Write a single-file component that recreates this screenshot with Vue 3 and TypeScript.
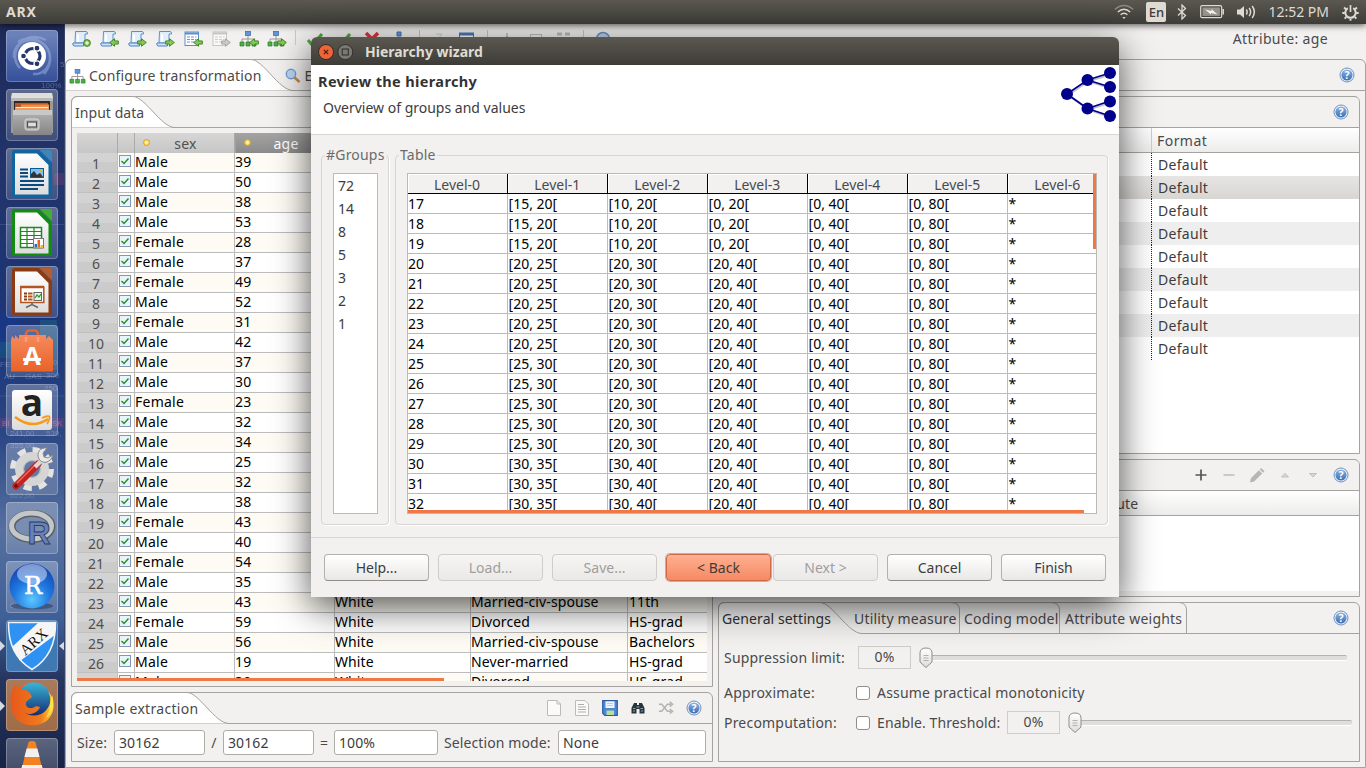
<script setup lang="ts">
interface Person { sex: string; age: number; race?: string; status?: string; edu?: string }

const people: Person[] = [
  { sex: 'Male', age: 39 }, { sex: 'Male', age: 50 }, { sex: 'Male', age: 38 }, { sex: 'Male', age: 53 },
  { sex: 'Female', age: 28 }, { sex: 'Female', age: 37 }, { sex: 'Female', age: 49 }, { sex: 'Male', age: 52 },
  { sex: 'Female', age: 31 }, { sex: 'Male', age: 42 }, { sex: 'Male', age: 37 }, { sex: 'Male', age: 30 },
  { sex: 'Female', age: 23 }, { sex: 'Male', age: 32 }, { sex: 'Male', age: 34 }, { sex: 'Male', age: 25 },
  { sex: 'Male', age: 32 }, { sex: 'Male', age: 38 }, { sex: 'Female', age: 43 }, { sex: 'Male', age: 40 },
  { sex: 'Female', age: 54 }, { sex: 'Male', age: 35 },
  { sex: 'Male', age: 43, race: 'White', status: 'Married-civ-spouse', edu: '11th' },
  { sex: 'Female', age: 59, race: 'White', status: 'Divorced', edu: 'HS-grad' },
  { sex: 'Male', age: 56, race: 'White', status: 'Married-civ-spouse', edu: 'Bachelors' },
  { sex: 'Male', age: 19, race: 'White', status: 'Never-married', edu: 'HS-grad' },
  { sex: 'Male', age: 39, race: 'White', status: 'Divorced', edu: 'HS-grad' },
]

const range = (v: number, step: number): string => {
  const low = Math.floor(v / step) * step
  return `[${low}, ${low + step}[`
}
const levels: string[] = [0, 1, 2, 3, 4, 5, 6].map((n) => `Level-${n}`)
const hierarchy: string[][] = Array.from({ length: 16 }, (_, i) => {
  const v = 17 + i
  return [String(v), range(v, 5), range(v, 10), range(v, 20), range(v, 40), range(v, 80), '*']
})
const groups: number[] = [72, 14, 8, 5, 3, 2, 1]
const formats: string[] = Array(9).fill('Default')
const launchers: string[] = ['dash', 'files', 'writer', 'calc', 'impress', 'store', 'amazon', 'settings', 'r', 'rstudio', 'arx', 'firefox', 'vlc']
</script>

<template>
  <div class="screen">
    <svg class="defs" width="0" height="0">
      <defs>
        <linearGradient id="gTile" x1="0" y1="0" x2="0" y2="1"><stop offset="0" stop-color="#fff" /><stop offset="1" stop-color="#dcdcdc" /></linearGradient>
        <linearGradient id="gBlue" x1="0" y1="0" x2="0" y2="1"><stop offset="0" stop-color="#8db4e3" /><stop offset="1" stop-color="#3a6db4" /></linearGradient>
        <linearGradient id="gMetal" x1="0" y1="0" x2="0" y2="1"><stop offset="0" stop-color="#b4b4b4" /><stop offset="1" stop-color="#858585" /></linearGradient>
        <linearGradient id="gBag" x1="0" y1="0" x2="0" y2="1"><stop offset="0" stop-color="#f58a5c" /><stop offset="1" stop-color="#ea6226" /></linearGradient>
        <radialGradient id="gBall" cx=".5" cy=".8" r=".8"><stop offset="0" stop-color="#5cc8ff" /><stop offset=".5" stop-color="#1f78e0" /><stop offset="1" stop-color="#1242b0" /></radialGradient>
        <linearGradient id="gFox" x1="0" y1="0" x2="1" y2="0"><stop offset="0" stop-color="#e8581a" /><stop offset=".7" stop-color="#f07a1c" /><stop offset="1" stop-color="#ffd640" /></linearGradient>
        <linearGradient id="gGlobe" x1="0" y1="0" x2="0" y2="1"><stop offset="0" stop-color="#39b5d8" /><stop offset="1" stop-color="#142c72" /></linearGradient>
        <linearGradient id="gTab" x1="0" y1="0" x2="0" y2="1"><stop offset="0" stop-color="#fff" /><stop offset="1" stop-color="#f2f1f0" /></linearGradient>
        <linearGradient id="gKnob" x1="0" y1="0" x2="0" y2="1"><stop offset="0" stop-color="#fff" /><stop offset="1" stop-color="#dedcda" /></linearGradient>
      </defs>
      <symbol id="help" viewBox="0 0 16 16">
        <circle cx="8" cy="8" r="7" fill="#f4f7fb" stroke="#6d90be" />
        <circle cx="8" cy="8" r="5.600" fill="url(#gBlue)" />
        <text x="8" y="12" text-anchor="middle" font-size="10.500" font-weight="700" fill="#fff" font-family="Noto Sans, sans-serif">?</text>
      </symbol>
      <symbol id="arrow" viewBox="0 0 9 8"><path d="M.6 2.600H4V.6L8.400 4 4 7.400V5.400H.6z" fill="#8fc455" stroke="#3c8a2a" stroke-width=".9" /></symbol>
      <symbol id="scroll" viewBox="0 0 18 18">
        <path d="M4.500 1.500H15q1.800.2 1.500 2.500H14V13H4z" fill="#e2eefa" stroke="#5f93cc" />
        <path d="M2 13H12.500V16H3Q1.200 15.500 2 13z" fill="#cfe2f6" stroke="#4c83c2" />
        <path d="M7 4.500V12" stroke="#fff" stroke-width="2" />
      </symbol>
      <symbol id="tree" viewBox="0 0 18 18">
        <path d="M9 4V9M3 13V9H15V13M9 9V13" fill="none" stroke="#9a9a9a" />
        <rect x="6.500" y="1.500" width="5" height="4" fill="#6397d8" stroke="#3f72b4" stroke-width=".8" />
        <path d="M1 12h4v4H1zM7 12h4v4H7zM13 12h4v4h-4z" fill="#4fae45" stroke="#2c7b28" stroke-width=".7" />
      </symbol>
      <symbol id="sheet" viewBox="0 0 18 18">
        <rect x="2" y="2" width="13.500" height="13.500" fill="#fff" stroke="currentColor" />
        <path d="M2 3.500H15.500" stroke="currentColor" stroke-width="2" />
        <path d="M4 7H13.500M4 9.500H13.500M4 12H13.500" stroke="currentColor" stroke-dasharray="3 1" stroke-width=".9" />
      </symbol>
    </svg>

    <header class="topbar">
      <b class="appname">ARX</b>
      <div class="tray">
        <svg width="20" height="16" viewBox="0 0 20 16" fill="none" stroke="#dfdbd2" stroke-width="1.500"><path d="M.8 5.500Q10-2.500 19.200 5.500" opacity=".4" /><path d="M3.800 8Q10 2.500 16.200 8M6.600 10.800Q10 7.800 13.400 10.800" /><path d="M8.300 13H11.700L10 15z" fill="#dfdbd2" stroke="none" /></svg>
        <span class="lang">En</span>
        <svg class="bt" width="10" height="16" viewBox="0 0 10 16" fill="none" stroke="#dfdbd2" stroke-width="1.300"><path d="M1 4.500 8.500 11.500 5 15V1L8.500 4.500 1 11.500" /></svg>
        <svg class="bat" width="25" height="14" viewBox="0 0 25 14"><rect x=".7" y=".7" width="21" height="12" rx="1.500" fill="none" stroke="#dfdbd2" stroke-width="1.200" /><rect x="2.500" y="2.500" width="17.400" height="8.400" fill="#96938b" /><path d="M23.200 4v5.500" stroke="#dfdbd2" stroke-width="1.500" /><path d="M5 4.500 11.500 6V4L17.500 9.500 11 8V9.500z" fill="#f4f2ee" /></svg>
        <svg class="vol" width="21" height="16" viewBox="0 0 21 16"><path d="M1 5.500H4L8 2V14L4 10.500H1z" fill="#dfdbd2" /><path d="M10.300 5.500Q12 8 10.300 10.500M13.200 3.800Q16 8 13.200 12.200M16.200 2Q20.500 8 16.200 14" fill="none" stroke="#dfdbd2" stroke-width="1.500" /></svg>
        <span class="clock">12:52 PM</span>
        <svg width="17" height="17" viewBox="0 0 17 17" fill="none" stroke="#dfdbd2"><path d="M5.800 4.200A5.200 5.200 0 1 0 11.200 4.200" stroke-width="2" /><path d="M8.500 1V8" stroke-width="1.700" /><path d="M2 3.500 4 5.200M15 3.500 13 5.200M.3 9H2.800M14.200 9H16.700M2.700 14.600 4.200 13M14.300 14.600 12.800 13M8.500 14.500V16.800" stroke-width="1.900" /></svg>
      </div>
    </header>

    <div class="below">
      <nav class="launcher">
        <svg class="wall" width="65" height="744" viewBox="0 0 65 744" font-family="Liberation Sans" font-size="8" fill="#7d97c8">
          <path d="M0 200.500H65M0 372H65" stroke="#6b87ba" opacity=".5" />
          <rect y="290" width="20" height="38" fill="#163aa0" opacity=".6" /><rect x="40" y="296" width="17" height="50" fill="#1f8d93" opacity=".5" /><rect y="318" width="26" height="16" fill="#127b88" opacity=".5" />
          <rect y="394" width="65" height="10" fill="#7b3f7c" opacity=".75" /><rect x="54" y="149" width="11" height="12" fill="#8a3f6e" opacity=".6" />
          <text x="2" y="402" fill="#d08bb0">BI</text><text x="52" y="402" fill="#d08bb0">SK</text>
          <text x="0" y="343">FEB</text><text x="44" y="341">350</text><text x="4" y="355">AU</text><text x="25" y="355">GAS</text><text x="44" y="367">250</text><text x="46" y="354">300</text><text x="10" y="412">241,00</text><text x="46" y="412">539,</text><text x="10" y="424">355,00</text><text x="10" y="474">622,00</text><text x="10" y="584">608,00</text><text x="41" y="64">100%</text><text x="60" y="43">5</text>
        </svg>
        <div v-for="k in launchers" :key="k" class="tile" :class="k">
          <svg v-if="k === 'dash'" width="52" height="52" viewBox="0 0 52 52">
            <path d="M8 28C6 4 44 4 44 28 44 38 36 45 27 44M12 12C30 0 56 22 38 44M14 38C0 24 18-2 40 10" fill="none" stroke="#a9bce8" stroke-opacity=".45" stroke-width="2.500" />
            <circle cx="26" cy="26" r="14" fill="#fff" /><circle cx="26.500" cy="26" r="7.500" fill="none" stroke="#26386b" stroke-width="3.200" />
            <g fill="#26386b" stroke="#fff" stroke-width="1.300"><circle cx="17.500" cy="26" r="3" /><circle cx="31" cy="18.200" r="3" /><circle cx="31" cy="33.800" r="3" /></g>
          </svg>
          <svg v-else-if="k === 'files'" width="52" height="52" viewBox="0 0 52 52">
            <path d="M6 4H46L47 10V44H5V10z" fill="#9a9a99" /><path d="M6 4H46L47 9H5z" fill="#dededc" /><path d="M5 9H47V12H5z" fill="#b9b9b7" /><rect x="8" y="12" width="36" height="10" fill="#2e2a28" />
            <path d="M9 14H42V17H9z" fill="#c9531f" /><path d="M15 15.500H43V21H15z" fill="#f08a44" /><path d="M9 17.500H43V21H9z" fill="#f29a58" /><path d="M10 18.500H42" stroke="#fff" opacity=".8" />
            <path d="M7 21H46V46H7z" fill="url(#gMetal)" /><path d="M7 21H46V26H7z" fill="#c8c8c8" /><rect x="19" y="30" width="14" height="11" rx="2" fill="#b0b0b0" stroke="#dadada" /><rect x="21.500" y="33" width="9" height="5" fill="#ddd" stroke="#4f4f4f" stroke-width="1.200" />
          </svg>
          <svg v-else-if="['writer', 'calc', 'impress'].includes(k)" width="52" height="52" viewBox="0 0 52 52">
            <path d="M8.500 2H33L46 15V49H6V4.500Q6 2 8.500 2z" :fill="k === 'writer' ? '#11659e' : k === 'calc' ? '#138a12' : '#8c3a12'" />
            <path d="M34 2H44Q46 2 46 4V14z" :fill="k === 'writer' ? '#3a86bd' : k === 'calc' ? '#3faf35' : '#b85c2a'" />
            <path d="M9 5.500H31L42.500 17V46.500H9z" fill="url(#gTile)" />
            <g v-if="k === 'writer'"><path d="M14 21.500H22M14 25H22M14 28.500H22M14 33H38M14 37H38M14 41H32" stroke="#0b4a7c" stroke-width="1.900" /><rect x="24.500" y="20.500" width="13" height="9" fill="#7fc0ee" stroke="#0b5c96" /><path d="M25 29V26L28 23 31 27 34 25 37 29z" fill="#333" /><circle cx="35" cy="23" r="1.300" fill="#f6b21c" /></g>
            <g v-else-if="k === 'calc'"><rect x="14.500" y="20.500" width="21" height="20" fill="#fff" stroke="#1b8a18" stroke-width="1.500" /><path d="M14 24.500H36M14 28.500H36M14 32.500H36M14 36.500H36M21 20V41M28 20V41" stroke="#1b8a18" stroke-width="1.200" /><rect x="27.500" y="31.500" width="10" height="9.500" fill="#fff" stroke="#777" /><path d="M28.500 37H31V40.500H28.500z" fill="#2c6fb2" /><path d="M31.500 33H34V40.500H31.500z" fill="#e5661c" /><path d="M34.500 38H37V40.500H34.500z" fill="#f2b81c" /></g>
            <g v-else><rect x="14.800" y="21" width="23" height="15.500" fill="#fff" stroke="#b3551f" stroke-width="1.500" /><path d="M14 21H38" stroke="#b3551f" stroke-width="2.500" /><path d="M18 27.500H21M18 30.500H21M18 33.500H21" stroke="#8c3a12" stroke-width="1.800" /><path d="M22 27.500H26.500M22 30.500H26.500M22 33.500H26.500" stroke="#b3551f" stroke-width="1.800" /><rect x="28" y="26.500" width="7.500" height="8" fill="#e9f4e7" stroke="#666" /><path d="M29 32 31 29 33 31 35 28" fill="none" stroke="#2b9a28" stroke-width="1.300" /><path d="M26 36.500V39M20 41.500 26 38.500 32 41.500" fill="none" stroke="#666" stroke-width="1.500" /></g>
          </svg>
          <svg v-else-if="k === 'store'" width="52" height="52" viewBox="0 0 52 52">
            <path d="M20 17V9Q20 5.500 24 5.500H28Q32 5.500 32 9V17" fill="none" stroke="#d9673a" stroke-width="2.600" /><path d="M6 11 9 14V10L13 14V10H40V14L43 11 47 15V46.500H5V15z" fill="url(#gBag)" />
            <path d="M20 17V12M32 17V12" stroke="#f3a17c" stroke-width="2.400" /><text x="26" y="40" text-anchor="middle" font-family="Open Sans, sans-serif" font-size="25" font-weight="700" fill="#fff">A</text><path d="M17 34.500H35" stroke="#fff" stroke-width="3" />
          </svg>
          <svg v-else-if="k === 'amazon'" width="52" height="52" viewBox="0 0 52 52">
            <rect x="6" y="6" width="40" height="40" rx="3" fill="url(#gTile)" /><text x="26" y="32" text-anchor="middle" font-family="Open Sans, sans-serif" font-size="37" font-weight="700" fill="#222">a</text>
            <path d="M9 33Q26 46 42 35" fill="none" stroke="#f79a1c" stroke-width="2.600" /><path d="M36 34Q43 31 43.500 33T41 40" fill="none" stroke="#f79a1c" stroke-width="1.800" />
          </svg>
          <svg v-else-if="k === 'settings'" width="52" height="52" viewBox="0 0 52 52">
            <circle cx="26" cy="26" r="18" fill="none" stroke="#e3e3e1" stroke-width="8" stroke-dasharray="7.600 6.537" /><circle cx="26" cy="26" r="12.500" fill="none" stroke="#d5d5d3" stroke-width="9" /><circle cx="26" cy="26" r="8.500" fill="none" stroke="#b5b5b3" />
            <path d="M10 43 32 21" stroke="#c4241f" stroke-width="7" stroke-linecap="round" /><path d="M11 40 30 21" stroke="#ef6a60" stroke-width="1.500" /><path d="M29 24 36 17" stroke="#d8d8d8" stroke-width="4.500" /><path d="M41 5C34 4 30 10 33 16 36 21 44 21 47 12L42 15 38 14 37 10z" fill="#e8e8e8" stroke="#8a8a8a" /><circle cx="10" cy="43" r="1.800" fill="#601310" />
          </svg>
          <svg v-else-if="k === 'r'" width="52" height="52" viewBox="0 0 52 52">
            <ellipse cx="26" cy="24.500" rx="20" ry="13" fill="none" stroke="#5e6164" stroke-width="7" /><ellipse cx="25.500" cy="24" rx="20" ry="13" fill="none" stroke="#c3c7ca" stroke-width="5" />
            <text x="33" y="42" text-anchor="middle" font-family="Liberation Sans" font-size="32" font-weight="700" fill="#6a80b3" stroke="#2a3c6c" stroke-width=".9">R</text>
          </svg>
          <svg v-else-if="k === 'rstudio'" width="52" height="52" viewBox="0 0 52 52">
            <ellipse cx="26" cy="45" rx="21" ry="3.500" fill="#2b3f64" opacity=".6" /><circle cx="26" cy="25" r="22.500" fill="url(#gBall)" /><ellipse cx="26" cy="13" rx="15" ry="10" fill="#fff" opacity=".45" />
            <text x="27" y="33" text-anchor="middle" font-family="DejaVu Serif" font-size="24" fill="#fff" stroke="#fff" stroke-width=".5">R</text>
          </svg>
          <svg v-else-if="k === 'arx'" width="52" height="52" viewBox="0 0 52 52">
            <path d="M2.500 2.500H49.500C50 26 40 41 26 49.500 12 41 2 26 2.500 2.500z" fill="#2f92f2" stroke="#eef4fa" stroke-width="1.500" />
            <path d="M32 3H49L49 15 14 41 6 27z" fill="#f6f6f6" />
            <text x="28" y="26.500" text-anchor="middle" font-family="Liberation Serif" font-size="15" fill="#111" transform="rotate(-42 28 22)">ARX</text>
          </svg>
          <svg v-else-if="k === 'firefox'" width="52" height="52" viewBox="0 0 52 52">
            <circle cx="26" cy="25" r="21" fill="url(#gFox)" /><circle cx="28" cy="20" r="16.500" fill="url(#gGlobe)" />
            <path d="M5 27C3 16 7 9 9 5L14 11C19 9 24 13 26 18L21 22C17 27 24 32 30 27L34 28C31 36 20 37 16 32 20 41 34 41 41 32 46 26 45 17 42 13 52 24 48 40 35 45 18 50 6 40 5 27z" fill="url(#gFox)" />
            <path d="M46 16C49 24 47 34 40 39 45 32 43 25 46 16z" fill="#ffe24a" />
          </svg>
          <svg v-else width="52" height="52" viewBox="0 0 52 52">
            <path d="M22.500 4Q26 2 29.500 4L40 45H12z" fill="#f58220" /><path d="M20.700 10.500H31.300L33.600 19H18.400zM16.300 27H35.700L38 35H14z" fill="#f1f1f1" /><rect x="7" y="42" width="38" height="7" rx="2" fill="#f58220" />
          </svg>
        </div>
        <svg class="pips" width="65" height="120" viewBox="0 0 65 120" fill="#d5d9e2"><path d="M0 20 5 25 0 30zM65 20 59 25 65 30zM0 80 5 85 0 90z" /></svg>
      </nav>

      <main class="app">
        <div class="toolbar">
          <div class="tools">
            <div v-for="n in 4" :key="'s' + n" class="tool"><svg width="18" height="18"><use href="#scroll" /></svg>
              <svg v-if="n === 1" class="badge" width="8" height="8" viewBox="0 0 8 8"><circle cx="4" cy="4" r="3.400" fill="#85bd50" stroke="#3c8a2a" /><path d="M2 4H6M4 2V6" stroke="#fff" /></svg>
              <svg v-else class="badge" :class="{ flip: n === 2 }" width="10" height="9"><use href="#arrow" /></svg>
            </div>
            <div class="tool blue"><svg width="18" height="18"><use href="#sheet" /></svg><svg class="badge flip" width="10" height="9"><use href="#arrow" /></svg></div>
            <div class="tool dim"><svg width="18" height="18"><use href="#sheet" /></svg><svg class="badge" width="10" height="9"><use href="#arrow" /></svg></div>
            <div class="tool"><svg width="18" height="18"><use href="#tree" /></svg><svg class="badge flip" width="10" height="9"><use href="#arrow" /></svg></div>
            <div class="tool"><svg width="18" height="18"><use href="#tree" /></svg><svg class="badge" width="10" height="9"><use href="#arrow" /></svg></div>
            <i class="sep"></i>
            <svg class="more" width="320" height="18" viewBox="0 0 320 18" fill="none">
              <path d="M10 10 14 15 24 4M38 10 42 15 52 4" stroke="#4fa543" stroke-width="3" /><path d="M68 3 80 15M80 3 68 15" stroke="#d8383c" stroke-width="3.500" />
              <path d="M99 2H103V6H99z" fill="#6397d8" stroke="#3f72b4" /><path d="M138 4H144L140 9" stroke="#ccc" /><path d="M121.500 0V15M189.500 0V15M285.500 0V15" stroke="#c8c6c3" />
              <rect x="161.500" y="3.500" width="14" height="12" fill="#fff" stroke="#4a76b8" /><path d="M161 4H176" stroke="#4a76b8" stroke-width="3" /><path d="M209 8V3M204 13 209 6 214 13" stroke="#bbb" stroke-width="1.500" /><rect x="232.500" y="4.500" width="11" height="9" stroke="#bbb" /><path d="M259 4H264M267 4H272" stroke="#bbb" stroke-width="3" />
              <circle cx="305" cy="9" r="6.500" fill="#b9d0ec" stroke="#6d90be" stroke-width="1.500" />
            </svg>
          </div>
          <span class="attr">Attribute: age</span>
        </div>

        <section class="folder outer">
          <div class="head">
            <svg class="shape" width="240" height="32" viewBox="0 0 240 32"><path d="M.5 31.500V7Q.5.500 7 .5H186C198 .5 214 31.500 228 31.500H0" fill="#fff" /><path d="M.5 32V7Q.5.500 7 .5H186C198 .5 214 31.500 228 31.500" fill="none" stroke="#a5a39f" /></svg>
            <div class="tab conf"><svg width="17" height="17"><use href="#tree" /></svg><span>Configure transformation</span></div>
            <div class="tab explore"><svg width="16" height="16" viewBox="0 0 16 16"><path d="M9.500 9.500 14.500 14" stroke="#c8894a" stroke-width="2.600" /><circle cx="6" cy="6" r="4.700" fill="#bcd6f4" stroke="#6f9ed4" stroke-width="1.400" /></svg><span>Explore</span></div>
            <svg class="help" width="16" height="16"><use href="#help" /></svg>
          </div>

          <div class="panes">
            <div class="column">
              <section class="folder input">
                <div class="head">
                  <svg class="shape" width="120" height="32" viewBox="0 0 120 32"><path d="M.5 31.500V7Q.5.500 7 .5H62C74 .5 90 31.500 104 31.500H0" fill="#fff" /><path d="M.5 32V7Q.5.500 7 .5H62C74 .5 90 31.500 104 31.500" fill="none" stroke="#a5a39f" /></svg>
                  <div class="tab"><span class="tight">Input data</span></div>
                </div>
                <div class="datatable">
                  <div class="dhead">
                    <i class="c-num"></i><i class="c-chk"></i>
                    <div class="c-sex hcell"><b class="dot"></b><span>sex</span></div>
                    <div class="c-age hcell on"><b class="dot"></b><span>age</span></div>
                    <i class="c-race"></i><i class="c-stat"></i><i class="c-edu"></i>
                  </div>
                  <div v-for="(p, i) in people" :key="i" class="drow">
                    <span class="c-num">{{ i + 1 }}</span>
                    <span class="c-chk"><svg width="12" height="12" viewBox="0 0 12 12"><rect x=".5" y=".5" width="11" height="11" fill="#e9f4fa" stroke="#8397b5" /><path d="M2.500 6 5 8.500 9.500 3.500" fill="none" stroke="#23882e" stroke-width="1.400" /></svg></span>
                    <span class="c-sex">{{ p.sex }}</span><span class="c-age">{{ p.age }}</span>
                    <span class="c-race">{{ p.race }}</span><span class="c-stat">{{ p.status }}</span><span class="c-edu">{{ p.edu }}</span>
                  </div>
                  <i class="hbar"></i>
                </div>
              </section>

              <section class="folder sample">
                <div class="head">
                  <svg class="shape" width="170" height="32" viewBox="0 0 170 32"><path d="M.5 31.500V7Q.5.500 7 .5H116C128 .5 144 31.500 158 31.500H0" fill="#fff" /><path d="M.5 32V7Q.5.500 7 .5H116C128 .5 144 31.500 158 31.500" fill="none" stroke="#a5a39f" /></svg>
                  <div class="tab"><span class="loose">Sample extraction</span></div>
                  <div class="acts">
                    <svg width="16" height="18" viewBox="0 0 16 18"><path d="M1.500 1.500H11L14.500 5V16.500H1.500z" fill="#fafafa" stroke="#bdbbb8" /><path d="M11 1.500V5H14.500" fill="none" stroke="#bdbbb8" /></svg>
                    <svg width="16" height="18" viewBox="0 0 16 18"><path d="M1.500 1.500H11L14.500 5V16.500H1.500z" fill="#fafafa" stroke="#bdbbb8" /><path d="M4 5.500H10M4 8H12M4 10.500H12M4 13H12" stroke="#b0aeab" /></svg>
                    <svg width="16" height="18" viewBox="0 0 16 18"><path d="M.7 1.700H15.300V16.300H2.700L.7 14.300z" fill="#4d86d4" stroke="#2c5ca8" stroke-width="1.200" /><path d="M3.500 2.300H12.500V9H3.500z" fill="#eef4fb" /><path d="M5 4.500H11M5 6.500H11" stroke="#b7cbe5" /><path d="M4.500 11.500H12V16H4.500z" fill="#b9dd9a" /></svg>
                    <svg width="16" height="18" viewBox="0 0 16 18"><path d="M4 4H7V6H9V4H12L14.500 9V14.500H9.500V10H6.500V14.500H1.500V9z" fill="#27343c" /><path d="M3 9.500H5.500M3 12H5M10.500 9.500H13M11 12H13M6.500 8H9.500" stroke="#91a2ac" /></svg>
                    <svg width="16" height="18" viewBox="0 0 17 18" fill="none" stroke="#b4b2af" stroke-width="1.500"><path d="M1 5H4L10 12.500H14M1 12.500H4L10 5H14" /><path d="M12.500 2.500 15.500 5 12.500 7.500M12.500 10 15.500 12.500 12.500 15" /></svg>
                    <svg width="16" height="18" viewBox="0 -1 16 18"><use href="#help" width="16" height="16" /></svg>
                  </div>
                </div>
                <div class="fields">
                  <span>Size:</span><span class="inp w91">30162</span><span class="op">/</span><span class="inp w91">30162</span><span class="op">=</span><span class="inp w104">100%</span><span class="mode">Selection mode:</span><span class="inp grow">None</span>
                </div>
              </section>
            </div>

            <div class="column">
              <section class="folder format">
                <div class="head right"><svg class="help" width="16" height="16"><use href="#help" /></svg></div>
                <div class="fhead"><span>Format</span></div>
                <div v-for="(f, i) in formats" :key="i" class="frow" :class="{ sel: i === 1, alt: i % 2 === 1 }"><span>{{ f }}</span></div>
              </section>
              <section class="folder attrs">
                <div class="head right">
                  <div class="edits">
                    <svg width="16" height="16" viewBox="0 0 16 16"><path d="M8 2.500V13.500M2.500 8H13.500" stroke="#555" stroke-width="1.700" /></svg>
                    <svg width="16" height="16" viewBox="0 0 16 16"><path d="M2.500 8H13.500" stroke="#c4c2c0" stroke-width="1.700" /></svg>
                    <svg width="16" height="17" viewBox="0 0 17 17"><path d="M1 16 2 11.500 10.500 3 14 6.500 5.500 15zM11.500 2 13 .6 16.400 4 15 5.500z" fill="#b8b6b4" /></svg>
                    <svg width="16" height="16" viewBox="0 0 16 16"><path d="M8 6.300 11.500 10H4.500z" fill="#d9d7d5" stroke="#c2c0be" /></svg>
                    <svg width="16" height="16" viewBox="0 0 16 16"><path d="M8 10 11.500 6.500H4.500z" fill="#d9d7d5" stroke="#c2c0be" /></svg>
                  </div>
                  <svg class="help" width="16" height="16"><use href="#help" /></svg>
                </div>
                <div class="ahead"><span>Attribute</span></div>
                <div class="abody"></div>
              </section>
              <section class="folder general">
                <div class="head">
                  <svg class="shape" width="470" height="32" viewBox="0 0 470 32"><path d="M.5 31.500V7Q.5.500 7 .5H102C114 .5 130 31.500 144 31.500V32H0" fill="url(#gTab)" /><path d="M.5 32V7Q.5.500 7 .5H102C114 .5 130 31.500 144 31.500M234 .5Q241.500 1 241.500 8V31M334 .5Q341.500 1 341.500 8V31M461 .5Q468.500 1 468.500 8V31" fill="none" stroke="#a5a39f" /></svg>
                  <div class="tab t1"><span class="dark">General settings</span></div><div class="tab t2"><span>Utility measure</span></div><div class="tab t3"><span>Coding model</span></div><div class="tab t4"><span>Attribute weights</span></div>
                  <svg class="help" width="16" height="16"><use href="#help" /></svg>
                </div>
                <div class="grow1"><span class="lab">Suppression limit:</span><span class="pct">0%</span>
                  <div class="slider s1"><svg width="14" height="22" viewBox="0 0 14 22"><path d="M1 6Q1 1 7 1T13 6V15L7 20.500 1 15z" fill="url(#gKnob)" stroke="#8f8d8a" /><path d="M4.500 8.500H9.500M4.500 11H9.500M4.500 13.500H9.500" stroke="#b4b2b0" /></svg></div>
                </div>
                <div class="grow2"><span class="lab">Approximate:</span><i class="box"></i><span>Assume practical monotonicity</span></div>
                <div class="grow3"><span class="lab">Precomputation:</span><i class="box"></i><span class="thr">Enable. Threshold:</span><span class="pct">0%</span>
                  <div class="slider s2"><svg width="14" height="22" viewBox="0 0 14 22"><path d="M1 6Q1 1 7 1T13 6V15L7 20.500 1 15z" fill="url(#gKnob)" stroke="#8f8d8a" /><path d="M4.500 8.500H9.500M4.500 11H9.500M4.500 13.500H9.500" stroke="#b4b2b0" /></svg></div>
                </div>
              </section>
            </div>
          </div>
        </section>
      </main>
    </div>

    <div class="dialog">
      <div class="title">
        <svg width="36" height="18" viewBox="0 0 36 18"><circle cx="8" cy="9" r="7.500" fill="#ed6438" stroke="#3b2a22" /><path d="M5.800 6.800 10.200 11.200M10.200 6.800 5.800 11.200" stroke="#4a1d0e" stroke-width="1.200" /><circle cx="27.300" cy="9" r="7.500" fill="#7b7973" stroke="#32312d" /><rect x="24.300" y="6" width="6" height="6" fill="none" stroke="#3a3935" stroke-width="1.200" /></svg>
        <b>Hierarchy wizard</b>
      </div>
      <div class="banner">
        <div><b>Review the hierarchy</b><p>Overview of groups and values</p></div>
        <svg width="60" height="60" viewBox="0 0 60 60"><g opacity=".25" stroke="#000" stroke-width="1.500" transform="translate(1 1.500)"><path d="M8 29 28.500 15 51 8M28.500 15 51 22M8 29 28.500 43.500 51 36M28.500 43.500 51 51" fill="none" /></g><path d="M8 29 28.500 15 51 8M28.500 15 51 22M8 29 28.500 43.500 51 36M28.500 43.500 51 51" fill="none" stroke="#00008b" stroke-width="1.700" /><g fill="#00008b"><circle cx="8" cy="29" r="6" /><circle cx="28.500" cy="15" r="6" /><circle cx="28.500" cy="43.500" r="6" /><circle cx="51" cy="8" r="6" /><circle cx="51" cy="22" r="6" /><circle cx="51" cy="36.500" r="6" /><circle cx="51" cy="51" r="6" /></g></svg>
      </div>
      <div class="content">
        <div class="group g1"><span class="legend">#Groups</span>
          <div class="list"><span v-for="g in groups" :key="g">{{ g }}</span></div>
        </div>
        <div class="group g2"><span class="legend">Table</span>
          <div class="htable">
            <div class="hrow hh"><span v-for="l in levels" :key="l">{{ l }}</span></div>
            <div v-for="row in hierarchy" :key="row[0]" class="hrow"><span v-for="(c, j) in row" :key="j">{{ c }}</span></div>
            <i class="vscroll"></i><i class="hscroll"></i>
          </div>
        </div>
      </div>
      <div class="buttons">
        <button>Help...</button><button disabled>Load...</button><button disabled>Save...</button><button class="focus">&lt; Back</button><button class="next" disabled>Next &gt;</button><button>Cancel</button><button>Finish</button>
      </div>
    </div>
  </div>
</template>

<style>
body { margin: 0; overflow: hidden; }
</style>

<style scoped>
* { box-sizing: border-box; }
.screen { position: relative; width: 1366px; height: 768px; overflow: hidden; display: flex; flex-direction: column; font: 14px/20px "Noto Sans", "Open Sans", sans-serif; color: #4a4a4a; background: #f2f1f0; white-space: nowrap; }
svg { flex: none; display: block; }
.defs { position: absolute; }
.topbar { height: 24px; flex: none; display: flex; justify-content: space-between; align-items: center; padding: 0 7px 0 6px; background: linear-gradient(#5a5850, #3d3c37); color: #dfdbd2; box-shadow: 0 1px 7px rgba(0, 0, 0, .7); position: relative; z-index: 1; }
.appname { font-size: 14px; letter-spacing: .8px; }
.tray { display: flex; align-items: center; }
.lang { width: 20px; height: 20px; margin-left: 12px; border-radius: 2px; background: #dfdbd2; color: #3d3c37; text-align: center; font-size: 13px; font-weight: 500; }
.bt { margin-left: 11px; }
.bat { margin-left: 13px; }
.vol { margin-left: 11px; }
.clock { margin: 0 13px 0 11px; }
.below { display: flex; flex: 1; min-height: 0; }
.launcher { position: relative; width: 65px; flex: none; padding: 6px 0 0 6px; display: flex; flex-direction: column; gap: 7px; overflow: hidden; border-right: 1px solid #39446a; background: linear-gradient(#1d2b59, #22346c 20%, #1c3678 42%, #2a4684 55%, #55709f 68%, #3f5f98 80%, #26365f 88%, #182346 100%); }
.wall { position: absolute; left: 0; top: 0; opacity: .55; }
.pips { position: absolute; left: 0; top: 597px; }
.tile { position: relative; flex: none; width: 52px; height: 52px; border-radius: 4px; background: linear-gradient(rgba(255, 255, 255, .28), rgba(255, 255, 255, .14)); box-shadow: inset 0 0 0 1px rgba(255, 255, 255, .25); }
.tile.dash { background: linear-gradient(#7086bd, #35509a); }
.tile.arx { background: #3f78b3; }
.tile.firefox { background: linear-gradient(#a97a5c, #a06c48); }

.app { flex: 1; min-width: 0; display: flex; flex-direction: column; background: #f2f1f0; letter-spacing: .2px; }
.toolbar { height: 35px; flex: none; display: flex; justify-content: space-between; padding: 6px 38px 0 6px; }
.tools { display: flex; align-items: flex-start; }
.tool { position: relative; width: 28px; height: 18px; }
.tool .badge { position: absolute; right: 8px; bottom: 1px; }
.flip { transform: scaleX(-1); }
.blue { color: #5c8fc8; }
.dim { color: #aaa; opacity: .6; filter: grayscale(1); }
.sep { width: 1px; height: 15px; background: #cfcdca; }
.more { margin-left: 2px; }
.attr { line-height: 18px; letter-spacing: .35px; }

.folder { position: relative; border: 1px solid #a5a39f; border-radius: 6px 6px 0 0; background: #f2f1f0; display: flex; flex-direction: column; }
.head { position: relative; flex: none; height: 32px; margin-top: -1px; border-bottom: 1px solid #a5a39f; display: flex; align-items: center; }
.shape { position: absolute; left: -1px; top: 0; }
.tab { position: relative; display: flex; align-items: center; padding-left: 3px; padding-top: 3px; }
.help { position: absolute; right: 10px; top: 8px; }
.outer { flex: 1; }
.conf span { margin-left: 3px; letter-spacing: .18px; }
.explore { margin-left: 20px; }
.explore span { margin-left: 4px; }
.tight { letter-spacing: .05px; }
.loose { letter-spacing: .3px; }
.panes { display: flex; gap: 5px; padding: 5px 0 0 5px; }
.column { flex: none; width: 642px; display: flex; flex-direction: column; gap: 5px; }
.input { height: 591px; }
.sample { height: 70px; }
.datatable { position: relative; margin: 5px 5px; height: 548px; overflow: hidden; background: #fff; color: #000; }
.dhead, .drow { display: flex; height: 20px; }
.dhead { background: linear-gradient(#d6d6d6, #c6c6c6); }
.dhead > * { border-right: 1px solid #aaa; }
.hcell { position: relative; text-align: center; color: #505050; padding: 1px 0 0 2px; }
.hcell.on { background: linear-gradient(#a4a4a4, #8b8b8b); color: #fff; border-left: 1px solid #83c03d; }
.dot { position: absolute; left: 8px; top: 6px; width: 7px; height: 7px; border-radius: 50%; border: 1px solid #d79f1c; background: #fff3b8; box-shadow: inset 0 0 0 1px #ffd75a; }
.c-num { width: 41px; } .c-chk { width: 17px; } .c-sex, .c-age { width: 100px; } .c-race { width: 136px; } .c-stat { width: 157px; } .c-edu { width: 79px; }
.drow > span { border-right: 1px solid #bcbcbc; border-bottom: 1px solid #bcbcbc; line-height: 18px; padding-left: 0; letter-spacing: .1px; }
.drow > .c-sex, .drow > .c-age { letter-spacing: .25px; }
.drow > .c-edu, .dhead > .c-edu { border-right: 0; }
.drow > .c-edu { padding-left: 1px; }
.drow:nth-child(even) { background: #fdfbf3; }
.drow > .c-num { text-align: center; color: #505050; line-height: 21px; padding: 0 2px 0 0; border-color: #c0c0c0; background: linear-gradient(#d3d3d3 50%, #cbcbcb 50%); }
.drow > .c-chk { padding: 2px 0 0 1px; }
.hbar { position: absolute; left: 0; bottom: 0; width: 367px; height: 3px; background: #f07746; }
.acts { position: absolute; right: 10px; top: 7px; display: flex; gap: 12px; }
.fields { display: flex; align-items: center; padding: 6px 6px 0 5px; letter-spacing: .1px; }
.inp { height: 25px; border: 1px solid #aeaca9; border-radius: 3px; background: #fff; line-height: 23px; padding-left: 4px; color: #3c3c3c; }
.w91 { width: 91px; } .w104 { width: 104px; }
.fields > span:first-child { width: 37px; }
.op { width: 18px; text-align: center; }
.op + .inp + .op { width: 20px; }
.mode { margin-left: 6px; width: 114px; }
.grow { flex: 1; }

.format { height: 358px; background: #fff; }
.format .head, .attrs .head { background: #f2f1f0; border-radius: 5px 5px 0 0; border-top: 1px solid #a5a39f; }
.fhead, .ahead { height: 25px; flex: none; border-bottom: 1px solid #a5a39f; background: linear-gradient(#fff, #ececeb); }
.fhead { padding-left: 432px; }
.fhead span { display: block; border-left: 1px solid #cfcdca; height: 24px; line-height: 26px; padding-left: 5px; letter-spacing: .45px; }
.frow { height: 23px; flex: none; padding-left: 432px; color: #3c3c3c; }
.frow span { display: block; height: 23px; line-height: 24px; border-left: 1px dotted #222; padding-left: 6px; letter-spacing: .3px; }
.frow.alt { background: #eee; }
.frow.sel { background: linear-gradient(#e6e5e3, #d8d6d3); }
.attrs { height: 138px; }
.edits { position: absolute; right: 38px; top: 7px; display: flex; gap: 12px; }
.ahead { line-height: 26px; padding-left: 359px; }
.abody { height: 75px; background: #fff; }
.general { height: 160px; }
.general .head { border-radius: 5px 5px 0 0; }
.attrs .help, .format .help { top: 7px; }
.t1 { width: 132px; } .t2 { width: 110px; } .t3 { width: 101px; }
.general .tab { padding-top: 2px; }
.t1 span { letter-spacing: .1px; }
.dark { color: #333; }
.grow1, .grow2, .grow3 { display: flex; align-items: center; padding-left: 5px; }
.grow1 { height: 47px; padding-top: 1px; } .grow2 { height: 24px; } .grow3 { height: 36px; }
.lab { width: 134px; }
.pct { width: 53px; height: 23px; border: 1px solid #cfcdca; line-height: 19px; text-align: center; margin-top: -2px; }
.box { width: 14px; height: 14px; margin-right: 7px; border: 1px solid #8f8d8a; border-radius: 3px; background: #fff; }
.grow2 .lab, .grow3 .lab { width: 132px; }
.thr { width: 130px; letter-spacing: .1px; }
.slider { position: relative; height: 22px; margin-left: 8px; display: flex; align-items: center; }
.slider::before { content: ""; position: absolute; left: 8px; right: 0; top: 8px; height: 4px; border-top: 1px solid #b4b2af; border-bottom: 1px solid #fff; background: #e0dedc; border-radius: 2px; }
.slider svg { position: relative; }
.s1 { width: 428px; } .s2 { width: 284px; }

.dialog { position: absolute; left: 311px; top: 37px; width: 808px; height: 560px; border-radius: 6px 6px 0 0; background: #f2f1f0; display: flex; flex-direction: column; box-shadow: 0 10px 36px rgba(0, 0, 0, .68); z-index: 2; }
.title { height: 28px; flex: none; border-radius: 6px 6px 0 0; background: linear-gradient(#5a5850, #3d3c37); color: #dfdbd2; display: flex; align-items: center; padding: 1px 0 0 7px; }
.title b { margin-left: 11px; font-size: 14px; }
.banner { height: 70px; flex: none; background: #fff; border-bottom: 1px solid #d8d6d4; display: flex; justify-content: space-between; padding: 7px 6px 0 7px; color: #3c3c3c; }
.banner b { display: block; margin-top: -1px; color: #333; font-size: 14.5px; letter-spacing: .37px; }
.banner p { margin: 7px 0 0 5px; }
.banner svg { margin: -7px -6px 0 0; }
.content { height: 403px; flex: none; padding: 20px 11px 12px 10px; display: flex; gap: 6px; border-bottom: 1px solid #d8d6d4; }
.group { position: relative; border: 1px solid #d8d6d4; border-radius: 4px; height: 370px; box-shadow: 1px 1px 0 #fff; }
.legend { position: absolute; top: -11px; left: 3px; padding: 0 1px; background: #f2f1f0; color: #6b6b6b; letter-spacing: .2px; }
.g1 { width: 68px; padding: 17px 11px 0; }
.g2 { width: 713px; padding: 17px 10px 0 11px; }
.list { width: 45px; height: 341px; border: 1px solid #bcbab7; background: #fff; display: flex; flex-direction: column; padding: 0 0 0 4px; line-height: 23px; color: #3c3c3c; }
.htable { position: relative; height: 341px; width: 690px; border: 1px solid #bcbab7; background: #fff; overflow: hidden; color: #000; }
.hrow { display: flex; width: 700px; height: 20px; }
.hrow span { width: 100px; flex: none; border-right: 1px solid #bcbcbc; border-bottom: 1px solid #bcbcbc; line-height: 19px; }
.hrow span + span { padding-left: .6px; }
.hrow.hh span { text-align: center; padding-right: 1px; border-color: #000; background: #f2f1f0; box-shadow: inset 1px 1px 0 #fff; color: #4a4a4a; line-height: 21px; overflow: hidden; }
.vscroll { position: absolute; right: 0; top: 0; width: 3px; height: 75px; background: #f07746; }
.hscroll { position: absolute; left: 0; bottom: 0; width: 676px; height: 3px; background: #f07746; }
.buttons { display: flex; gap: 9px; padding: 16px 13px; }
button { width: 105px; height: 27px; padding: 0; border: 1px solid #b3b1ae; border-bottom-color: #8f8d8a; border-radius: 4px; background: linear-gradient(#fff, #e9e8e6); font: inherit; color: #3c3c3c; }
button:disabled { border-color: #cfcdca; background: linear-gradient(#f6f5f4, #ebe9e8); color: #a09e9c; }
.focus { border-color: #d0694a; background: linear-gradient(#ffb091, #f58a63); color: #4a3a34; box-shadow: 0 0 0 1px #f0a082; }
.next { margin-left: -7px; }
</style>
